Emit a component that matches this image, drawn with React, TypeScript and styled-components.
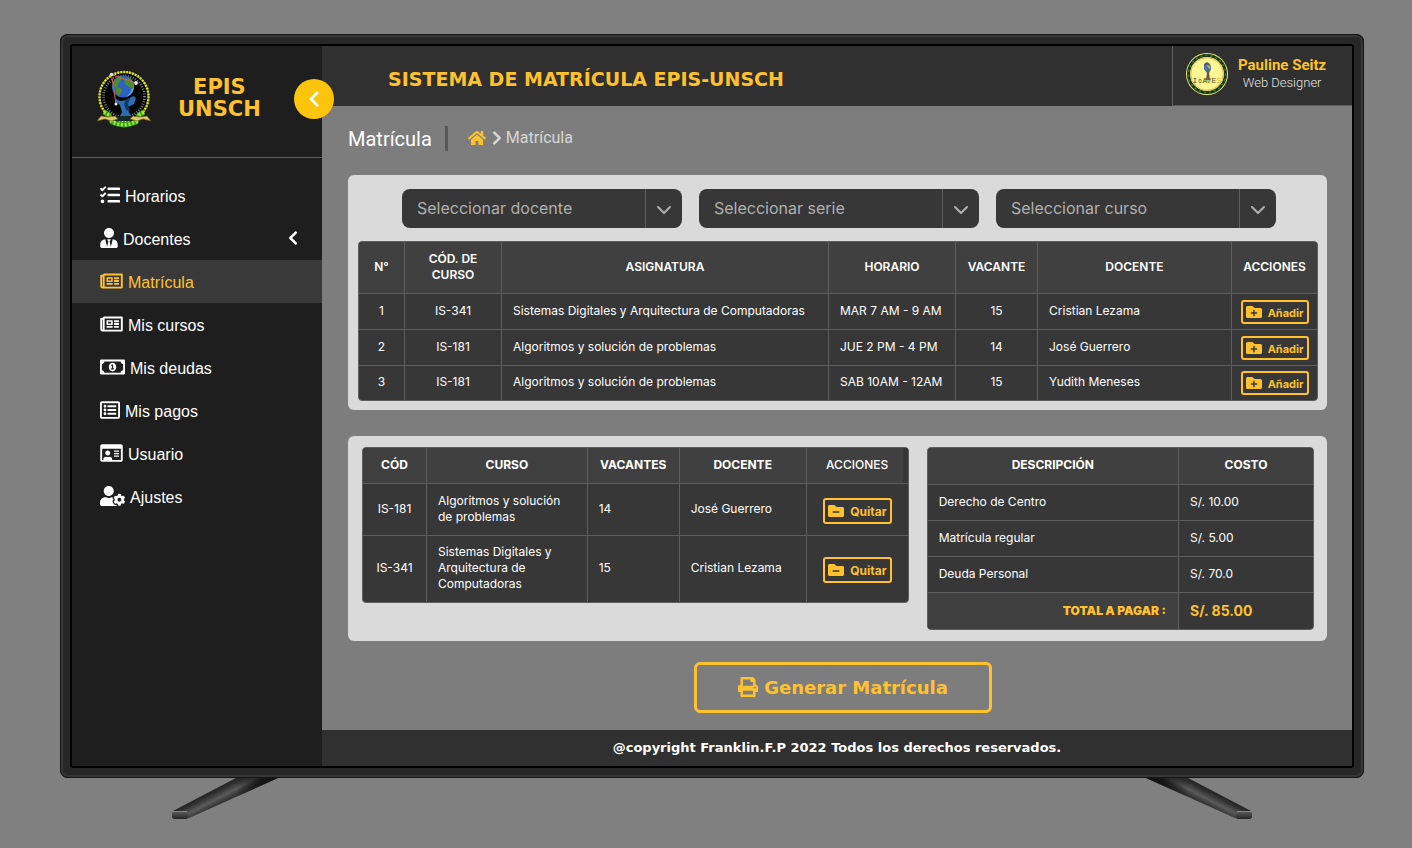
import React from "react";
import styled, { createGlobalStyle, css } from "styled-components";
import {
  FaChevronLeft,
  FaChevronRight,
  FaFolderMinus,
  FaFolderPlus,
  FaHome,
  FaPrint,
  FaRegIdCard,
  FaRegListAlt,
  FaRegMoneyBillAlt,
  FaRegNewspaper,
  FaTasks,
  FaUserCog,
  FaUserTie,
} from "react-icons/fa";
import { FiChevronDown } from "react-icons/fi";

const color = {
  gold: "#ffc22e",
  room: "#808080",
  sidebar: "#1e1e1e",
  bar: "#303030",
  content: "#7d7d7d",
  panel: "#dadada",
  cell: "#373737",
  head: "#404040",
  line: "#5e5e5e",
};

const display = `"DejaVu Sans", Verdana, sans-serif`;

const GlobalStyle = createGlobalStyle`
  *, *::before, *::after { box-sizing: border-box; }
  body {
    margin: 0;
    background: ${color.room};
    font-family: Inter, "Liberation Sans", sans-serif;
    color: #fff;
  }
  button, select { font: inherit; cursor: pointer; }
  a { color: inherit; text-decoration: none; }
  h1, h2, p, ul, ol { margin: 0; padding: 0; }
  ul, ol { list-style: none; }
`;

/* ---------- Television ---------- */

const Room = styled.div`
  padding: 34px 48px 28px 60px;
`;

const Bezel = styled.div`
  padding: 10px;
  border-radius: 8px;
  background: #272727;
  box-shadow: inset 0 0 0 1px #161616, inset 0 0 0 3px #363636;
`;

const Screen = styled.div`
  display: flex;
  border: 2px solid #000;
  border-radius: 3px;
  background: ${color.content};
`;

const Stand = styled.div`
  display: flex;
  justify-content: space-between;
  padding: 0 112px;
  svg { display: block; }
`;

const Leg = ({ flip = false }: { flip?: boolean }) => {
  const id = flip ? "legRight" : "legLeft";
  return (
    <svg width="107" height="41" viewBox="0 0 107 41" aria-hidden="true">
      <defs>
        <linearGradient id={id} gradientUnits="userSpaceOnUse" x1="46" y1="8" x2="58" y2="31">
          <stop offset="0" stopColor="#1d1d1d" />
          <stop offset="0.2" stopColor="#333" />
          <stop offset="0.42" stopColor="#5a5a5a" />
          <stop offset="0.6" stopColor="#383838" />
          <stop offset="1" stopColor="#151515" />
        </linearGradient>
        <linearGradient id={id + "Shade"} x1="0" x2="1">
          <stop offset="0.6" stopColor="#111" stopOpacity="0" />
          <stop offset="0.85" stopColor="#111" stopOpacity="0.9" />
        </linearGradient>
        <linearGradient id={id + "Foot"} x1="0" y1="0" x2="0" y2="1">
          <stop offset="0" stopColor="#5c5c5c" />
          <stop offset="1" stopColor="#262626" />
        </linearGradient>
      </defs>
      <g transform={flip ? "matrix(-1 0 0 1 107 0)" : undefined}>
        <path d="M64 0H106L16 40.500H1L0 33.500z" fill={`url(#${id})`} />
        <path d="M64 0H106L16 40.500H1L0 33.500z" fill={`url(#${id}Shade)`} />
        <path d="M0 33.500h16.500v5L14.500 41H2L0 39.500z" fill={`url(#${id}Foot)`} />
        <path d="M0 33.500h15" stroke="#8a8a8a" />
      </g>
    </svg>
  );
};

/* ---------- Sidebar ---------- */

const Sidebar = styled.aside`
  position: relative;
  flex: 0 0 250px;
  background: ${color.sidebar};
`;

const Brand = styled.div`
  display: flex;
  align-items: center;
  gap: 26px;
  height: 112px;
  padding: 0 24px 8px;
  border-bottom: 1px solid ${color.line};
`;

const BrandName = styled.div`
  font: 700 21px/22px ${display};
  color: ${color.gold};
  text-align: center;
`;

const CollapseButton = styled.button`
  position: absolute;
  top: 33px;
  right: -12px;
  display: flex;
  align-items: center;
  justify-content: center;
  width: 40px;
  height: 40px;
  padding: 0;
  border: 0;
  border-radius: 50%;
  background: #fcc40a;
  color: #fff;
  font-size: 18px;
`;

const Menu = styled.ul`
  padding-top: 16px;
`;

const MenuLink = styled.a<{ $active?: boolean; $icon: number }>`
  display: flex;
  align-items: center;
  gap: 5px;
  height: 43px;
  padding: 0 24px 0 28px;
  background: ${(p) => (p.$active ? "#393939" : "transparent")};
  color: ${(p) => (p.$active ? color.gold : "#fff")};
  font: 16px/20px "Liberation Sans", Arial, sans-serif;

  span { flex: 1; padding-top: 3px; }
  svg { width: ${(p) => p.$icon}px; height: 20px; margin-bottom: 2px; }
  svg:last-child { width: 10px; height: 16px; }
`;

/* ---------- Top bar ---------- */

const Main = styled.div`
  display: flex;
  flex-direction: column;
  flex: 1;
  min-width: 0;
`;

const TopBar = styled.header`
  display: flex;
  align-items: stretch;
  justify-content: space-between;
  height: 60px;
  background: ${color.bar};
`;

const SystemTitle = styled.h1`
  padding: 22px 0 0 66px;
  font: 700 19px/22px ${display};
  color: ${color.gold};
`;

const UserCard = styled.div`
  display: flex;
  align-items: center;
  gap: 10px;
  flex: 0 0 180px;
  padding: 0 0 3px 13px;
  border-left: 1px solid ${color.line};
  border-bottom: 1px solid ${color.line};
  font-family: Roboto, sans-serif;
  text-align: center;
`;

const UserName = styled.div`
  font-size: 15px;
  font-weight: 700;
  line-height: 18px;
  color: ${color.gold};
`;

const UserRole = styled.div`
  font-size: 13px;
  font-weight: 300;
  line-height: 18px;
  color: #e4e4e4;
`;

/* ---------- Content ---------- */

const Content = styled.main`
  flex: 1;
  padding: 20px 25px 17px 26px;
`;

const PageHead = styled.div`
  display: flex;
  align-items: center;
  height: 25px;
  margin-bottom: 24px;
  font-family: Roboto, sans-serif;
`;

const PageTitle = styled.h2`
  padding: 2px 13px 0 0;
  border-right: 3px solid #585858;
  font-size: 20px;
  font-weight: 400;
  line-height: 23px;
`;

const Crumbs = styled.ol`
  display: flex;
  align-items: center;
  gap: 6px;
  padding: 0 0 1px 20px;
  font-size: 16px;
  line-height: 20px;
  color: #d6d6d6;

  li { display: flex; align-items: center; gap: 4px; }
  a { display: flex; font-size: 18px; color: ${color.gold}; }
  li > svg { width: 10px; height: 16px; }
`;

const Panel = styled.section`
  border-radius: 6px;
  background: ${color.panel};
`;

const CoursePanel = styled(Panel)`
  padding: 14px 9px 9px 10px;
`;

const SummaryPanel = styled(Panel)`
  display: flex;
  align-items: flex-start;
  gap: 18px;
  margin-top: 26px;
  padding: 11px 13px 11px 14px;
`;

const Filters = styled.div`
  display: flex;
  justify-content: center;
  gap: 17px;
  margin-bottom: 13px;
  padding-left: 2px;
`;

const SelectBox = styled.label`
  display: grid;
  grid-template-columns: 243px 37px;
  align-items: stretch;
  overflow: hidden;
  height: 39px;
  border-radius: 8px;
  background: ${color.cell};
  color: #b0b0b0;

  select {
    grid-area: 1 / 1 / 2 / 3;
    padding: 0 44px 2px 15px;
    border: 0;
    appearance: none;
    background: transparent;
    color: inherit;
    font-size: 16px;
    font-weight: 400;
  }
`;

const SelectArrow = styled.span`
  grid-area: 1 / 2 / 2 / 3;
  display: flex;
  align-items: center;
  justify-content: center;
  padding-top: 3px;
  border-left: 1px solid ${color.line};
  font-size: 24px;
  pointer-events: none;
`;

const TableFrame = styled.div<{ $grow?: number }>`
  overflow: hidden;
  ${(p) => p.$grow && css`flex: ${p.$grow} 1 0;`}
  border: 1px solid ${color.line};
  border-radius: 4px;
  background: ${color.cell};
`;

const Table = styled.table`
  width: 100%;
  table-layout: fixed;
  border-collapse: separate;
  border-spacing: 0;
  font-size: 12px;
  line-height: 16px;

  tr > * + * { border-left: 1px solid ${color.line}; }
  tbody > tr > *, tfoot > tr > * { border-top: 1px solid ${color.line}; }
`;

const Th = styled.th<{ $height: number; $weight?: number; $open?: boolean }>`
  height: ${(p) => p.$height}px;
  padding: 0 10px 2px;
  background: ${color.head};
  font-weight: ${(p) => p.$weight ?? 700};
  ${(p) => p.$open && css`box-shadow: inset -5px 0 0 ${color.cell};`}
`;

const Td = styled.td<{ $center?: boolean; $height?: number }>`
  height: ${(p) => p.$height ?? 36}px;
  padding: ${(p) => (p.$center ? "0 0 2px" : "8px 11px 10px")};
  text-align: ${(p) => (p.$center ? "center" : "left")};
`;

const TotalLabel = styled.th`
  height: 37px;
  padding: 0 12px 0 11px;
  background: ${color.head};
  color: ${color.gold};
  font-weight: 900;
  text-align: right;
`;

const TotalValue = styled.td`
  padding: 0 11px;
  color: ${color.gold};
  font-size: 14px;
  font-weight: 700;
`;

const RowButton = styled.button<{ $large?: boolean }>`
  display: inline-flex;
  align-items: center;
  justify-content: space-between;
  width: ${(p) => (p.$large ? 69 : 68)}px;
  height: ${(p) => (p.$large ? 26 : 24)}px;
  margin-top: ${(p) => (p.$large ? 4 : 2)}px;
  padding: 0 3px;
  border: 2px solid ${color.gold};
  border-radius: 3px;
  background: transparent;
  color: ${color.gold};
  font-size: ${(p) => (p.$large ? 12 : 11)}px;
  font-weight: 700;
  line-height: 16px;
  vertical-align: middle;

  svg { width: 16px; height: 16px; }
  span { padding-top: 2px; }
`;

const PrintRow = styled.div`
  display: flex;
  justify-content: center;
  padding: 21px 0 0 11px;
`;

const PrintButton = styled.button`
  display: flex;
  align-items: center;
  justify-content: center;
  gap: 6px;
  width: 298px;
  height: 51px;
  border: 3px solid ${color.gold};
  border-radius: 6px;
  background: transparent;
  color: ${color.gold};
  font: 700 18px/20px ${display};

  svg { width: 20px; height: 20px; margin-bottom: 2px; }
`;

const Footer = styled.footer`
  height: 36px;
  background: ${color.bar};
  font: 700 13px/36px ${display};
  text-align: center;
`;

/* ---------- Emblems ---------- */

const Crest = () => (
  <svg width="56" height="60" viewBox="0 0 56 60" role="img" aria-label="EPIS">
    <circle cx="28" cy="28.500" r="24.500" fill="#050505" stroke="#6e7413" strokeWidth="2" />
    <circle cx="28" cy="28.500" r="24.500" fill="none" stroke="#e8ea2c" strokeWidth="2.400" strokeDasharray="1.600 1.400" />
    <circle cx="28" cy="28.500" r="20.500" fill="none" stroke="#8f9494" strokeWidth="2.600" strokeDasharray="0.800 1.700" />
    <path d="M20 31l4 2 7-1 6-4 3 2-2 6-6 3 1 6 4 5H23l3-6-2-7-5-4z" fill="#2c6db5" />
    <path d="M30 31l4-1-2 6 2 7-4-1-2-6z" fill="#16375f" />
    <path d="M20 48h16l3 5H18z" fill="#142a26" />
    <circle cx="27" cy="18.500" r="11" fill="#2d62c0" />
    <path d="M34 10a11 11 0 0 1-4 19 14 14 0 0 0 4-19z" fill="#5fa9dc" />
    <path d="M17 14l4-4 4-2 1 3-3 3-1 4-4 2zM28 11l6-1 4 6-1 5-4-2-4-3zM20 19l5 1 1 3-3 5-3-4z" fill="#4c8c34" />
    <path d="M15.500 6.500L40 15M15.500 6.500L20 36" stroke="#d9584c" strokeWidth="1.100" fill="none" />
    <path d="M8 44l5 3 3 7 6 2 6 1 6-1 6-2 3-7 5-3" fill="none" stroke="#3f9e1d" strokeWidth="5" />
    <path d="M8 44l5 3 3 7 6 2 6 1 6-1 6-2 3-7 5-3" fill="none" stroke="#9bf03a" strokeWidth="3.600" strokeDasharray="2 1.800" />
    <path d="M1 53l4-5 8 1 6-1 3 3-7 2-6-2zM55 53l-4-5-8 1-6-1-3 3 7 2 6-2z" fill="#e3c96c" stroke="#5d4b17" strokeWidth="0.600" />
    <g fill="#e8e8ee">
      <circle cx="15.500" cy="6.500" r="1.700" />
      <circle cx="40" cy="15" r="1.900" />
      <circle cx="20" cy="36" r="1.500" />
    </g>
  </svg>
);

const Avatar = () => (
  <svg width="42" height="42" viewBox="0 0 42 42" role="img" aria-label="Pauline Seitz">
    <circle cx="21" cy="21" r="21" fill="#f3ea7c" />
    <circle cx="21" cy="21" r="18.500" fill="#fdf692" stroke="#1c3417" strokeWidth="3" />
    <circle cx="21" cy="21" r="18.500" fill="none" stroke="#38833a" strokeWidth="1.400" strokeDasharray="2 3" />
    <circle cx="21" cy="21" r="16.300" fill="none" stroke="#d9a63c" strokeWidth="0.800" />
    <path d="M18 11l3-2 3 2 1 5-2 4 1 7h-4l1-7-3-4z" fill="#5d574c" />
    <circle cx="21.500" cy="14.500" r="3.300" fill="#3b78bd" />
    <path d="M21 12l3 1v3l-2-1z" fill="#d6a436" />
    <g fontFamily="Liberation Mono, monospace" fontSize="8" textAnchor="middle" fill="#4b4a35">
      <text x="9" y="29.500">I</text>
      <text x="14" y="29.500" fontSize="6">O</text>
      <text x="19" y="29.500">A</text>
      <text x="23" y="29.500" fill="#97791d">V</text>
      <text x="28" y="29.500">E</text>
      <text x="33" y="29.500" fill="#e9b52d">S</text>
    </g>
  </svg>
);

/* ---------- Data ---------- */

const menu = [
  { label: "Horarios", icon: FaTasks, width: 20 },
  { label: "Docentes", icon: FaUserTie, width: 18, nested: true },
  { label: "Matrícula", icon: FaRegNewspaper, width: 23, active: true },
  { label: "Mis cursos", icon: FaRegNewspaper, width: 23 },
  { label: "Mis deudas", icon: FaRegMoneyBillAlt, width: 25 },
  { label: "Mis pagos", icon: FaRegListAlt, width: 20 },
  { label: "Usuario", icon: FaRegIdCard, width: 23 },
  { label: "Ajustes", icon: FaUserCog, width: 25 },
];

const filters = ["Seleccionar docente", "Seleccionar serie", "Seleccionar curso"];

const courseHeads = ["N°", "CÓD. DE CURSO", "ASIGNATURA", "HORARIO", "VACANTE", "DOCENTE", "ACCIONES"];

const courses = [
  ["IS-341", "Sistemas Digitales y Arquitectura de Computadoras", "MAR 7 AM - 9 AM", "15", "Cristian Lezama"],
  ["IS-181", "Algoritmos y solución de problemas", "JUE 2 PM - 4 PM", "14", "José Guerrero"],
  ["IS-181", "Algoritmos y solución de problemas", "SAB 10AM - 12AM", "15", "Yudith Meneses"],
];

const chosen = [
  ["IS-181", "Algoritmos y solución de problemas", "14", "José Guerrero"],
  ["IS-341", "Sistemas Digitales y Arquitectura de Computadoras", "15", "Cristian Lezama"],
];

const costs = [
  ["Derecho de Centro", "S/. 10.00"],
  ["Matrícula regular", "S/. 5.00"],
  ["Deuda Personal", "S/. 70.0"],
];

const Columns = ({ widths }: { widths: (number | string)[] }) => (
  <colgroup>
    {widths.map((w, i) => (
      <col key={i} width={w === "auto" ? undefined : w} />
    ))}
  </colgroup>
);

export default function App() {
  return (
    <>
      <GlobalStyle />
      <Room>
        <Bezel>
          <Screen>
            <Sidebar>
              <Brand>
                <Crest />
                <BrandName>
                  EPIS
                  <br />
                  UNSCH
                </BrandName>
              </Brand>
              <nav>
                <Menu>
                  {menu.map(({ label, icon: Icon, width, active, nested }) => (
                    <li key={label}>
                      <MenuLink href="#" $active={active} $icon={width}>
                        <Icon />
                        <span>{label}</span>
                        {nested && <FaChevronLeft />}
                      </MenuLink>
                    </li>
                  ))}
                </Menu>
              </nav>
              <CollapseButton type="button" aria-label="Contraer menú">
                <FaChevronLeft />
              </CollapseButton>
            </Sidebar>

            <Main>
              <TopBar>
                <SystemTitle>SISTEMA DE MATRÍCULA EPIS-UNSCH</SystemTitle>
                <UserCard>
                  <Avatar />
                  <div>
                    <UserName>Pauline Seitz</UserName>
                    <UserRole>Web Designer</UserRole>
                  </div>
                </UserCard>
              </TopBar>

              <Content>
                <PageHead>
                  <PageTitle>Matrícula</PageTitle>
                  <Crumbs>
                    <li>
                      <a href="#" aria-label="Inicio">
                        <FaHome />
                      </a>
                    </li>
                    <li>
                      <FaChevronRight />
                      Matrícula
                    </li>
                  </Crumbs>
                </PageHead>

                <CoursePanel>
                  <Filters>
                    {filters.map((text) => (
                      <SelectBox key={text}>
                        <select aria-label={text}>
                          <option>{text}</option>
                        </select>
                        <SelectArrow>
                          <FiChevronDown />
                        </SelectArrow>
                      </SelectBox>
                    ))}
                  </Filters>
                  <TableFrame>
                    <Table>
                      <Columns widths={[45, 97, "auto", 127, 82, 194, 86]} />
                      <thead>
                        <tr>
                          {courseHeads.map((text) => (
                            <Th key={text} $height={51} $weight={600}>
                              {text}
                            </Th>
                          ))}
                        </tr>
                      </thead>
                      <tbody>
                        {courses.map(([code, name, time, seats, teacher], i) => {
                          const height = i === courses.length - 1 ? 35 : 36;
                          return (
                            <tr key={i}>
                              <Td $center $height={height}>{i + 1}</Td>
                              <Td $center $height={height}>{code}</Td>
                              <Td $height={height}>{name}</Td>
                              <Td $height={height}>{time}</Td>
                              <Td $center $height={height}>{seats}</Td>
                              <Td $height={height}>{teacher}</Td>
                              <Td $center $height={height}>
                                <RowButton type="button">
                                  <FaFolderPlus />
                                  <span>Añadir</span>
                                </RowButton>
                              </Td>
                            </tr>
                          );
                        })}
                      </tbody>
                    </Table>
                  </TableFrame>
                </CoursePanel>

                <SummaryPanel>
                  <TableFrame $grow={547}>
                    <Table>
                      <Columns widths={[63, "auto", 92, 127, 102]} />
                      <thead>
                        <tr>
                          <Th $height={35}>CÓD</Th>
                          <Th $height={35}>CURSO</Th>
                          <Th $height={35}>VACANTES</Th>
                          <Th $height={35}>DOCENTE</Th>
                          <Th $height={35} $weight={500} $open>ACCIONES</Th>
                        </tr>
                      </thead>
                      <tbody>
                        {chosen.map(([code, name, seats, teacher]) => (
                          <tr key={code}>
                            <Td $center $height={52}>{code}</Td>
                            <Td $height={52}>{name}</Td>
                            <Td $height={52}>{seats}</Td>
                            <Td $height={52}>{teacher}</Td>
                            <Td $center $height={52}>
                              <RowButton type="button" $large>
                                <FaFolderMinus />
                                <span>Quitar</span>
                              </RowButton>
                            </Td>
                          </tr>
                        ))}
                      </tbody>
                    </Table>
                  </TableFrame>
                  <TableFrame $grow={387}>
                    <Table>
                      <Columns widths={["auto", 135]} />
                      <thead>
                        <tr>
                          <Th $height={36}>DESCRIPCIÓN</Th>
                          <Th $height={36}>COSTO</Th>
                        </tr>
                      </thead>
                      <tbody>
                        {costs.map(([item, price]) => (
                          <tr key={item}>
                            <Td>{item}</Td>
                            <Td>{price}</Td>
                          </tr>
                        ))}
                      </tbody>
                      <tfoot>
                        <tr>
                          <TotalLabel scope="row">TOTAL A PAGAR :</TotalLabel>
                          <TotalValue>S/. 85.00</TotalValue>
                        </tr>
                      </tfoot>
                    </Table>
                  </TableFrame>
                </SummaryPanel>

                <PrintRow>
                  <PrintButton type="button">
                    <FaPrint />
                    Generar Matrícula
                  </PrintButton>
                </PrintRow>
              </Content>

              <Footer>@copyright Franklin.F.P 2022 Todos los derechos reservados.</Footer>
            </Main>
          </Screen>
        </Bezel>
        <Stand>
          <Leg />
          <Leg flip />
        </Stand>
      </Room>
    </>
  );
}
